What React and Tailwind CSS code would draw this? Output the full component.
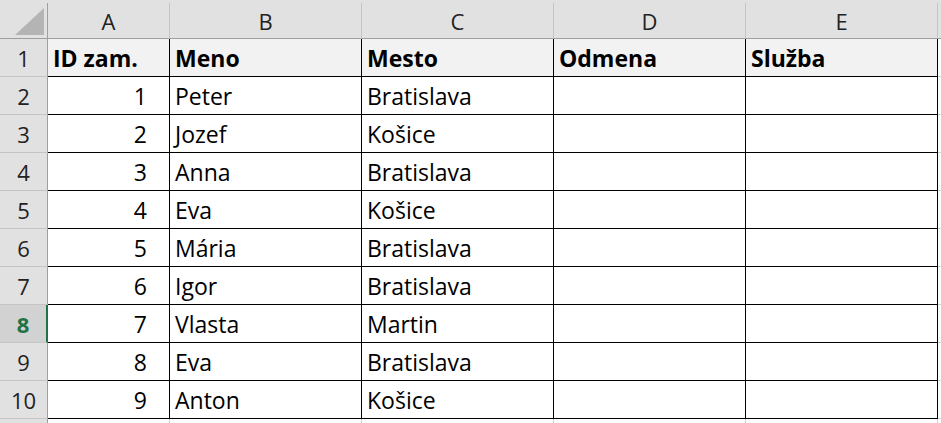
const columns = [
  { key: 'A', width: 'w-[122px]' },
  { key: 'B', width: 'w-[192px]' },
  { key: 'C', width: 'w-[192px]' },
  { key: 'D', width: 'w-[192px]' },
  { key: 'E', width: 'w-[192px]' },
];

const employees = [
  { id: 1, name: 'Peter', city: 'Bratislava' },
  { id: 2, name: 'Jozef', city: 'Košice' },
  { id: 3, name: 'Anna', city: 'Bratislava' },
  { id: 4, name: 'Eva', city: 'Košice' },
  { id: 5, name: 'Mária', city: 'Bratislava' },
  { id: 6, name: 'Igor', city: 'Bratislava' },
  { id: 7, name: 'Vlasta', city: 'Martin' },
  { id: 8, name: 'Eva', city: 'Bratislava' },
  { id: 9, name: 'Anton', city: 'Košice' },
];

const selectedRow = 8;

const RowHeader = ({ n }) => {
  const selected = n === selectedRow;
  return (
    <div
      className={
        selected
          ? 'w-[48px] h-full pt-[2px] flex items-center justify-center text-[22px] font-bold text-[#217346] bg-[#d2d2d2] border-r-2 border-r-[#217346] border-b border-b-[#c4c4c4]'
          : 'w-[48px] h-full pt-[2px] flex items-center justify-center text-[22px] text-[#222] bg-[#e1e1e1] border-r border-r-[#9f9f9f] border-b border-b-[#c4c4c4]'
      }
    >
      {n}
    </div>
  );
};

const Cell = ({ width, children, className = '' }) => (
  <div className={`${width} h-full pt-[2px] flex items-center border-r border-b border-black ${className}`}>
    {children}
  </div>
);

const App = () => {
  return (
    <div className="w-[941px] h-[423px] overflow-hidden bg-white text-[23px] text-black font-['Open_Sans',sans-serif]">
      {/* column letters */}
      <div className="flex h-[39px] pt-[3px] bg-[#e1e1e1]">
        <div className="w-[48px] h-full relative border-r border-r-[#9f9f9f] border-b border-b-[#9f9f9f]">
          <svg className="absolute left-0 top-0" width="47" height="35" viewBox="0 0 47 35">
            <polygon points="44,5 44,32 15,32" fill="#b4b4b4" />
          </svg>
        </div>
        {columns.map((col) => (
          <div
            key={col.key}
            className={`${col.width} h-full pt-[1px] flex items-center justify-center text-[22px] text-[#222] border-r border-r-[#c4c4c4] border-b border-b-[#9f9f9f]`}
          >
            {col.key}
          </div>
        ))}
        <div className="flex-1 h-full border-b border-b-[#9f9f9f]" />
      </div>

      {/* header row */}
      <div className="flex h-[38px]">
        <RowHeader n={1} />
        <Cell width="w-[122px]" className="bg-[#f2f2f2] font-bold pl-[5px]">ID zam.</Cell>
        <Cell width="w-[192px]" className="bg-[#f2f2f2] font-bold pl-[5px]">Meno</Cell>
        <Cell width="w-[192px]" className="bg-[#f2f2f2] font-bold pl-[5px]">Mesto</Cell>
        <Cell width="w-[192px]" className="bg-[#f2f2f2] font-bold pl-[5px]">Odmena</Cell>
        <Cell width="w-[192px]" className="bg-[#f2f2f2] font-bold pl-[5px]">Služba</Cell>
        <div className="flex-1 h-full border-b border-b-[#d4d4d4]" />
      </div>

      {employees.map((emp, i) => (
        <div key={emp.id} className="flex h-[38px]">
          <RowHeader n={i + 2} />
          <Cell width="w-[122px]" className="justify-end pr-[22px]">{emp.id}</Cell>
          <Cell width="w-[192px]" className="pl-[5px]">{emp.name}</Cell>
          <Cell width="w-[192px]" className="pl-[5px]">{emp.city}</Cell>
          <Cell width="w-[192px]" />
          <Cell width="w-[192px]" />
          <div className="flex-1 h-full border-b border-b-[#d4d4d4]" />
        </div>
      ))}

      {/* next empty row, cut off by the window */}
      <div className="flex h-[38px]">
        <div className="w-[48px] h-full bg-[#e1e1e1] border-r border-r-[#9f9f9f]" />
        {columns.map((col) => (
          <div key={col.key} className={`${col.width} h-full border-r border-r-[#d4d4d4]`} />
        ))}
      </div>
    </div>
  );
};

export default App;
